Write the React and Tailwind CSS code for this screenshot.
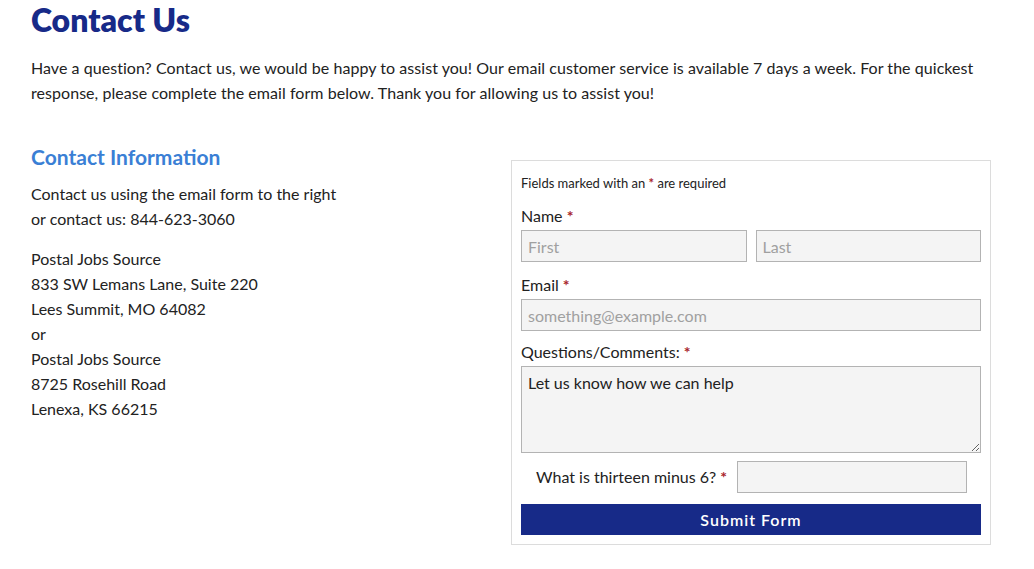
import React from 'react';

const font = { fontFamily: 'Lato, "Open Sans", sans-serif' };

const Req = () => <span className="text-[#a8232a] font-bold">*</span>;

export default function App() {
  return (
    <div className="bg-white w-[1034px] h-[569px] overflow-hidden text-[#222]" style={font}>
      <div className="pl-[31px] pr-[40px]">
        {/* Page title */}
        <h1 className="text-[32px] font-extrabold text-[#172a88] leading-[40px]">Contact Us</h1>
        <p className="mt-[15px] text-[16px] leading-[25px] tracking-[0.05px]">
          Have a question? Contact us, we would be happy to assist you! Our email customer service is available 7 days a week. For the quickest response, please complete the email form below. Thank you for allowing us to assist you!
        </p>

        <div className="flex items-start mt-[38px]">
          {/* Left column */}
          <div className="w-[480px]">
            <h2 className="text-[21px] font-bold text-[#3a7fd5] leading-[26px] mt-[1px]">Contact Information</h2>
            <p className="mt-[11px] text-[16px] leading-[25px]">
              Contact us using the email form to the right<br />
              or contact us: 844-623-3060
            </p>
            <p className="mt-[15px] text-[16px] leading-[25px]">
              Postal Jobs Source<br />
              833 SW Lemans Lane, Suite 220<br />
              Lees Summit, MO 64082<br />
              or<br />
              Postal Jobs Source<br />
              8725 Rosehill Road<br />
              Lenexa, KS 66215
            </p>
          </div>

          {/* Form */}
          <form className="w-[480px] mt-[17px] border border-[#dcdcdc] px-[9px] pt-[13px] pb-[9px]">
            <p className="text-[13px] leading-[18px]">Fields marked with an <Req /> are required</p>

            <label className="block mt-[15px] text-[16px] leading-[18px]">Name <Req /></label>
            <div className="flex gap-[9px] mt-[5px]">
              <input placeholder="First" className="flex-1 min-w-0 h-[32px] bg-[#f4f4f4] border border-[#b3b3b3] px-[6px] text-[16px] placeholder:text-[#a0a0a0] outline-none" />
              <input placeholder="Last" className="flex-1 min-w-0 h-[32px] bg-[#f4f4f4] border border-[#b3b3b3] px-[6px] text-[16px] placeholder:text-[#a0a0a0] outline-none" />
            </div>

            <label className="block mt-[14px] text-[16px] leading-[18px]">Email <Req /></label>
            <input placeholder="something@example.com" className="block w-full mt-[5px] h-[32px] bg-[#f4f4f4] border border-[#b3b3b3] px-[6px] text-[16px] placeholder:text-[#a0a0a0] outline-none" />

            <label className="block mt-[12px] text-[16px] leading-[18px]">Questions/Comments: <Req /></label>
            <textarea
              defaultValue="Let us know how we can help"
              className="block w-full mt-[5px] h-[87px] bg-[#f4f4f4] border border-[#b3b3b3] px-[6px] pt-[6px] text-[16px] leading-[20px] outline-none resize-y"
            />

            <div className="flex items-center mt-[8px] pl-[15px] pr-[14px]">
              <label className="text-[16px] whitespace-nowrap">What is thirteen minus 6? <Req /></label>
              <input className="ml-[10px] flex-1 min-w-0 h-[32px] bg-[#f4f4f4] border border-[#b3b3b3] px-[6px] outline-none" />
            </div>

            <button type="button" className="block w-full mt-[11px] h-[31px] bg-[#172a88] text-white text-[16px] font-semibold tracking-[1px]">
              Submit Form
            </button>
          </form>
        </div>
      </div>
    </div>
  );
}
